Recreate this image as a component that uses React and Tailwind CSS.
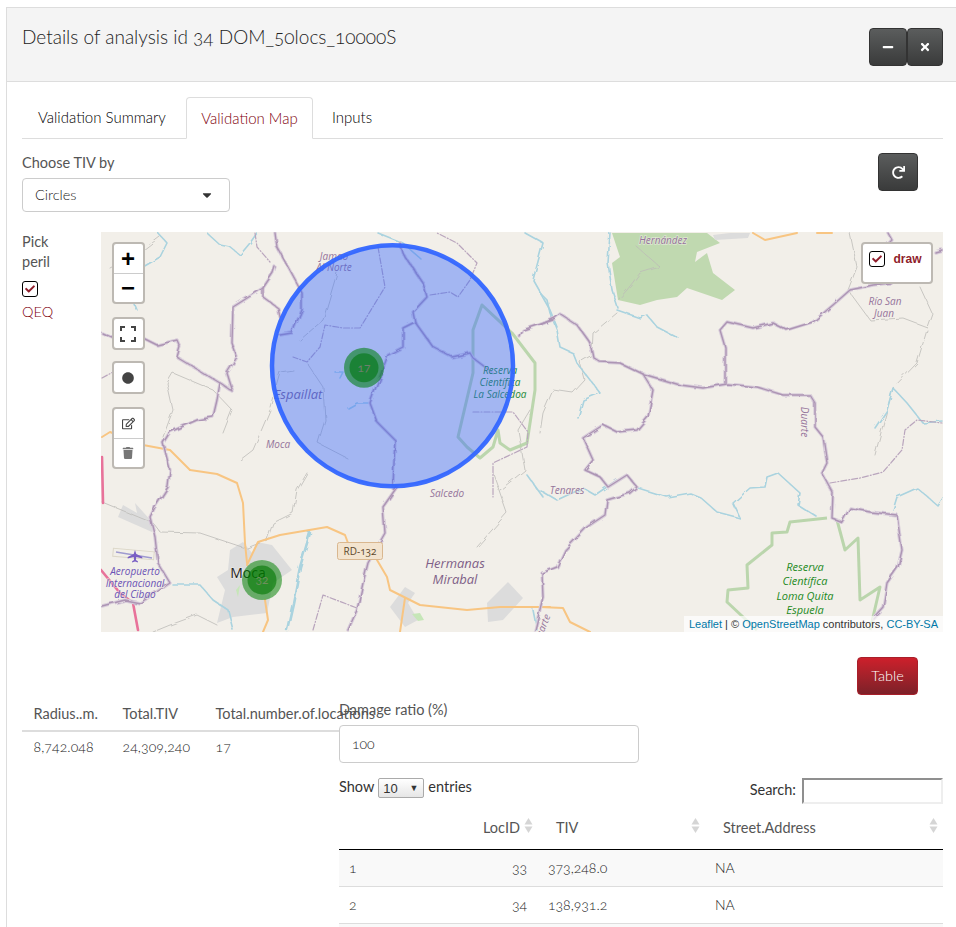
import { FaMinus, FaTimes, FaRedo, FaTrash, FaRegEdit, FaCircle, FaCheck, FaCaretDown } from "react-icons/fa";

// Map line work, in page coordinates (the svg viewBox starts at the map's corner).
const BOUNDARIES = [
  "M540 325L555 318L560 314L577 325L590 343L593 357L600 362L620 363L643 374L680 385L703 388L727 384L757 387L783 395L810 395L815 403L815 427L823 437L827 463L822 473L833 493L832 518L842 522L850 508L870 512L897 515L899 530L902 550L898 567L887 583L883 607L873 618",
  "M725 383L725 347L720 330L727 322L753 328L773 323L787 330L813 322L833 305L850 290L873 285L890 283",
  "M888 233L892 240L886 246",
  "M643 374L653 390L648 417L637 430L617 432L603 425L583 438L593 460L585 470L600 477L608 487L627 475L637 487L630 493L607 500L605 515L587 527L565 550L557 567L542 573L543 597L535 630",
  "M275 233L277 247L302 293L302 310L292 333L280 335",
  "M102 333L113 338L143 338L157 345L177 340L180 347L177 357L220 383L233 392L227 373L237 357L232 343L233 307L263 288L273 273L275 267",
  "M263 288L263 297L278 308L280 317",
  "M220 383L217 400L213 417L197 420L170 432L163 443L170 470L168 487L155 507L150 517L155 537L158 563L170 583L140 603L125 600L102 606",
  "M393 487L395 440L377 422L370 403L388 355L403 347L403 328L415 322L433 347L452 357L470 353L473 358L493 373",
  "M415 322L413 312L427 297L423 283L403 253L400 243",
  "M520 337L523 330L553 320",
  "M397 487L383 507L385 533L368 563L363 583L357 610L348 630",
  "M935 252L942 250",
];
const DASHED = [
  "M830 483L860 478L883 472L902 450L905 430L917 420L942 423",
  "M102 378L113 372",
  "M430 295L450 292L458 297L470 280L477 263L457 243L437 233",
  "M378 247L385 287L360 328L343 328L325 325L320 347L307 362L293 357",
  "M473 412L513 412L528 432L527 447L493 463L493 497",
  "M313 630L323 595L357 608",
  "M255 233L257 247L270 262",
];
const RIVERS = [
  "M617 310L640 318L647 315L657 327L678 338",
  "M610 233L608 263L612 290L618 308",
  "M540 293L547 300L550 313L557 330L560 347L573 353L577 363L590 380L600 393L583 400L578 418",
  "M540 490L557 500L583 488L595 495L617 480",
  "M638 488L667 497L690 493L700 497L717 512L740 518L733 503L750 488L765 487L767 477L778 473L800 493L798 505L817 517",
  "M893 510L897 497L917 488L937 505L942 497",
  "M875 428L887 410L893 388L907 403L923 423L942 421",
  "M158 233L167 243L160 257L143 267L135 273",
  "M135 305L137 310",
  "M207 233L220 245L230 247L240 255L250 243L257 233",
  "M173 585L200 585L213 600L228 610L233 630",
  "M378 233L403 243L422 260",
  "M525 233L543 243L533 280L550 310L557 327",
  "M348 408L357 403L368 403",
  "M335 372L343 372L340 378",
  "M527 475L543 497",
  "M533 610L537 630",
];
const THIN_RIVERS = ["M310 533L300 567L293 603L287 630"];
const ROADS = [
  "M190 470L217 474L237 483L243 503L245 543L247 563",
  "M247 565L258 542L280 535L327 527L345 535L348 543",
  "M377 560L387 577L390 590L420 605L467 610L500 607L550 607",
  "M405 598L400 632",
  "M265 600L268 620L263 632",
  "M102 437L110 432L143 445L170 450L190 470",
  "M540 607L563 608L570 622L590 632",
  "M753 233L765 240L797 233M817 233L832 233",
];
const MOTORWAY = ["M102 457L103 503", "M101 570L120 593L133 603L138 630"];
const THIN_ROADS = [
  "M102 502L153 523L160 532L200 533L245 548",
  "M637 247L660 267L640 273L627 290L618 300",
  "M850 233L857 267L848 290L870 320L903 318L927 327L932 313L920 287",
  "M927 330L917 363L893 388L887 410L875 455",
  "M617 313L593 333L592 355L580 362L585 380L573 393L553 390L543 413L540 433",
  "M163 437L173 410L167 383L173 373L213 390L232 410L223 433",
  "M110 268L143 250L160 237",
  "M270 410L253 450L240 460",
  "M337 273L323 320L300 340",
  "M293 370L280 372L270 407",
  "M307 363L323 387L325 420L318 443L347 458",
  "M217 625L197 615L170 625L153 632",
  "M247 548L267 540L273 523L293 513L297 490L307 473",
  "M493 473L507 513L477 547",
  "M530 410L518 430L525 470L500 490",
];
const TOWNS = [
  "243,542 230,550 228,570 217,577 225,590 217,623 233,617 267,613 273,583 292,570 272,545 257,542 252,553",
  "390,607 405,587 415,593 408,603 418,620 405,627",
  "487,603 508,582 523,598 503,620 488,622",
  "118,517 123,505 137,513 135,503 153,523 152,532",
  "713,235 730,233 750,233 748,238 715,240",
];

function Lines({ items, className, width, dash }) {
  return items.map((d) => (
    <path key={d} d={d} fill="none" className={className} strokeWidth={width} strokeDasharray={dash} strokeLinejoin="round" strokeLinecap="round" />
  ));
}

function Label({ x, y, size = 10, fill = "#95749b", italic = true, rotate, children }) {
  return (
    <text
      x={x}
      y={y}
      fontSize={size}
      fill={fill}
      fontStyle={italic ? "italic" : "normal"}
      fontFamily="'Open Sans', sans-serif"
      textAnchor="middle"
      stroke="#f2efe9"
      strokeOpacity="0.6"
      strokeWidth="1.5"
      paintOrder="stroke"
      transform={rotate ? `rotate(${rotate} ${x} ${y})` : undefined}
    >
      {children}
    </text>
  );
}

function MapDrawing() {
  return (
    <svg viewBox="101 232 842 400" className="absolute inset-0 w-full h-full">
      {/* natural lines wander a bit */}
      <filter id="wiggle" x="101" y="232" width="842" height="400" filterUnits="userSpaceOnUse">
        <feTurbulence type="fractalNoise" baseFrequency="0.09" numOctaves="2" seed="4" />
        <feDisplacementMap in="SourceGraphic" scale="5" />
      </filter>

      <rect x="101" y="232" width="842" height="400" fill="#f2efe9" />
      <polygon points="612,233 620,257 612,263 618,300 640,305 657,300 677,297 687,288 722,300 735,290 713,273 707,253 695,262 697,252 720,243 707,233" fill="#c0d9b0" />
      {TOWNS.map((p) => <polygon key={p} points={p} fill="#dcdcdc" />)}
      <polygon points="236,590 240,585 238,597" fill="#c6e6b8" />
      <polygon points="412,614 420,613 424,620 418,621" fill="#c6e6b8" />

      <g filter="url(#wiggle)">
        <Lines items={THIN_ROADS} className="stroke-[#bdbbb7]" width={0.8} />
        <Lines items={RIVERS} className="stroke-[#aad3df]" width={1.6} />
        <Lines items={THIN_RIVERS} className="stroke-[#aad3df]" width={2.6} />
      </g>
      <Lines items={ROADS} className="stroke-[#f8c582]" width={2} />
      <Lines items={MOTORWAY} className="stroke-[#e8729a]" width={2.6} />

      {/* reserve outlines */}
      <g fill="none" stroke="#b5d3a6" strokeWidth="3" strokeLinejoin="round" opacity="0.9">
        <path d="M827 518L790 522L787 532L772 533L772 545L747 565L748 588L728 590L727 602L757 630" />
        <path d="M837 520L845 550L858 538L860 600L880 587L870 630" />
        <path d="M482 305L512 333L535 363L535 390L527 443L510 450L500 443L498 430L493 447L480 458L467 447L458 437L473 373L473 330Z" />
      </g>

      <g filter="url(#wiggle)">
        <Lines items={BOUNDARIES} className="stroke-[#d9cedb]" width={3.4} />
        <Lines items={BOUNDARIES} className="stroke-[#ad95b4]" width={1.4} />
      </g>
      <Lines items={DASHED} className="stroke-[#b9a5bd]" width={1.2} dash="6 2 1 2" />

      {/* airport */}
      <rect x="113" y="550" width="41" height="8" fill="none" stroke="#dcd7c8" transform="rotate(5 133 554)" />
      <line x1="116" y1="552" x2="152" y2="558" stroke="#9f9bd0" strokeWidth="1.5" />
      <path d="M135 550l1.300 4 6 3v1.500l-6-1.600-.4 3 2 1.400v1.200l-2.900-.9-2.900.9v-1.200l2-1.400-.4-3-6 1.600v-1.500l6-3z" fill="#7a5fc4" />

      <Label x={334} y={260}>Jamao</Label>
      <Label x={334} y={271}>Al Norte</Label>
      <Label x={298} y={399} size={13} fill="#7d6699">Espaillat</Label>
      <Label x={278} y={448}>Moca</Label>
      <Label x={500} y={374} fill="#1d8a3a">Reserva</Label>
      <Label x={500} y={386} fill="#1d8a3a">Científica</Label>
      <Label x={500} y={398} fill="#1d8a3a">La Salcedoa</Label>
      <Label x={447} y={497}>Salcedo</Label>
      <Label x={567} y={494}>Tenares</Label>
      <Label x={801} y={422} rotate={90}>Duarte</Label>
      <Label x={885} y={305}>Río San</Label>
      <Label x={884} y={317}>Juan</Label>
      <Label x={663} y={244}>Hernández</Label>
      <Label x={455} y={568} size={13} fill="#7f5f87">Hermanas</Label>
      <Label x={455} y={584} size={13} fill="#7f5f87">Mirabal</Label>
      <Label x={135} y={575} fill="#6b52b5">Aeropuerto</Label>
      <Label x={135} y={587} fill="#6b52b5">Internacional</Label>
      <Label x={135} y={598} fill="#6b52b5">del Cibao</Label>
      <Label x={805} y={571} size={11} fill="#1d8a1d">Reserva</Label>
      <Label x={805} y={585} size={11} fill="#1d8a1d">Científica</Label>
      <Label x={805} y={600} size={11} fill="#1d8a1d">Loma Quita</Label>
      <Label x={805} y={614} size={11} fill="#1d8a1d">Espuela</Label>
      <Label x={545} y={630} rotate={-68}>Duarte</Label>
      <Label x={248} y={578} size={14} fill="#222" italic={false}>Moca</Label>

      <rect x="337.500" y="542.500" width="45" height="17" rx="2" fill="#f3e4cf" stroke="#d9b78f" />
      <text x="360" y="555" fontSize="10" textAnchor="middle" fill="#5d4a2d" fontFamily="'Open Sans', sans-serif">RD-132</text>

      {/* selection circle */}
      <circle cx="392.500" cy="365.800" r="120.500" fill="#3366ff" fillOpacity="0.41" stroke="#3366ff" strokeOpacity="0.95" strokeWidth="4.500" />

      {/* clusters, see-through so the map labels still show */}
      <circle cx="364" cy="367.700" r="20" fill="#007d10" fillOpacity="0.58" />
      <circle cx="364" cy="367.700" r="14.500" fill="#007610" fillOpacity="0.6" />
      <text x="364" y="372" fontSize="12" textAnchor="middle" fill="#6c7f6c" fontFamily="Lato, sans-serif">17</text>
      <circle cx="262" cy="580" r="20" fill="#008000" fillOpacity="0.53" />
      <circle cx="262" cy="580" r="14.500" fill="#007600" fillOpacity="0.6" />
      <text x="262" y="584" fontSize="12" textAnchor="middle" fill="#6c8f5c" fontFamily="Lato, sans-serif">32</text>
    </svg>
  );
}

function MapControl({ top, rows }) {
  return (
    <div style={{ top }} className="absolute left-[10.500px] w-[33px] rounded-[4px] border-2 border-[#bdb9b3] bg-white bg-clip-padding">
      {rows.map((icon, i) => (
        <div key={i} className={`h-[29px] flex items-center justify-center text-[#444] ${i > 0 ? "border-t border-[#ccc]" : ""}`}>
          {icon}
        </div>
      ))}
    </div>
  );
}

function CheckBox({ className = "" }) {
  return (
    <span className={`w-4 h-4 flex items-center justify-center rounded-[3px] border border-black bg-white text-[#8f1d2b] ${className}`}>
      <FaCheck size={10} />
    </span>
  );
}

function DarkButton({ className = "", children }) {
  return (
    <button type="button" className={`flex items-center justify-center rounded-[4px] border border-[#333] bg-gradient-to-b from-[#5b5d5d] to-[#3a3b3b] text-white ${className}`}>
      {children}
    </button>
  );
}

function SortArrows() {
  return (
    <svg width="9" height="15" viewBox="0 0 9 15" className="absolute top-[14px] right-[5px]" fill="#d5d5d5">
      <path d="M4.500 0L8.500 6.500H.5z" />
      <path d="M4.500 15L.5 8.500H8.500z" />
    </svg>
  );
}

export default function App() {
  return (
    <div className="w-[956px] h-[927px] overflow-hidden bg-white pt-[7px] pl-[6px] [font-family:Lato,sans-serif] [font-variant-numeric:oldstyle-nums] text-[14.500px] text-[#555]">
      <div className="border-l border-t border-[#ddd]">
        <div className="h-[74px] flex justify-between bg-[#f4f4f4] border-b border-[#ddd] pl-[15px] pr-[13px]">
          <h1 className="text-[19px] font-light mt-[16px] leading-[26px] text-[#222]">Details of analysis id 34 DOM_50locs_10000S</h1>
          <div className="flex mt-5">
            <DarkButton className="w-[38px] h-[38px]"><FaMinus size={12} /></DarkButton>
            <DarkButton className="w-[36px] h-[38px]"><FaTimes size={12} /></DarkButton>
          </div>
        </div>

        <div className="pt-[15px] pl-[15px] pr-[13px]">
          <div className="flex h-[42px] border-b border-[#ddd] text-[15px] font-light text-black">
            <div className="w-[162px] h-[41px] flex items-center pl-4">Validation Summary</div>
            <div className="w-[127px] h-[42px] ml-[2px] flex items-center justify-center rounded-t-[4px] border border-b-white border-[#ddd] bg-white text-[#80000c]">Validation Map</div>
            <div className="h-[41px] flex items-center pl-[19px]">Inputs</div>
          </div>

          <div className="flex justify-between h-[93px]">
            <div className="pt-[14px]">
              <div className="leading-5">Choose TIV by</div>
              <div className="mt-[5px] w-[208px] h-[34px] flex items-center justify-between rounded-[4px] border border-[#ccc] pl-3 pr-[15px]">
                <span className="pb-[1px] font-light text-[#222]">Circles</span>
                <FaCaretDown size={14} className="text-[#333]" />
              </div>
            </div>
            <DarkButton className="w-10 h-[38px] mt-[14px] mr-[25px]"><FaRedo size={13} /></DarkButton>
          </div>

          <div className="flex h-[400px]">
            <div className="w-[79px] leading-5">
              <div>Pick<br />peril</div>
              <CheckBox className="mt-[9px]" />
              <div className="mt-[5px] text-[#80000c] font-light">QEQ</div>
            </div>
            <div className="relative flex-1 overflow-hidden">
              <MapDrawing />
              <MapControl
                top={10}
                rows={[
                  <span className="text-[24px] font-bold leading-none text-black [font-family:'Liberation_Sans',sans-serif]">+</span>,
                  <span className="text-[24px] font-bold leading-none text-black [font-family:'Liberation_Sans',sans-serif]">−</span>,
                ]}
              />
              <MapControl
                top={85}
                rows={[
                  <svg width="16" height="16" viewBox="0 0 16 16" fill="none" stroke="#444" strokeWidth="2"><path d="M1 5V1H5M11 1H15V5M15 11V15H11M5 15H1V11" /></svg>,
                ]}
              />
              <MapControl top={129} rows={[<FaCircle size={12} />]} />
              <MapControl top={175} rows={[<FaRegEdit size={13} />, <FaTrash size={12} className="text-[#777]" />]} />
              <div className="absolute top-[10px] right-[10.500px] w-[72px] h-[42px] rounded-[4px] border-2 border-[#bdb9b3] bg-white pl-[6px] pt-[7px] flex items-start gap-[9px]">
                <CheckBox />
                <span className="text-[12px] font-bold leading-4 text-[#8f1d2b] [font-family:'Liberation_Sans',sans-serif]">draw</span>
              </div>
              <div className="absolute bottom-0 right-0 h-4 px-[5px] bg-white/70 text-[11px] leading-4 text-[#333] [font-family:'Liberation_Sans',sans-serif]">
                <span className="text-[#0078a8]">Leaflet</span> | © <span className="text-[#0078a8]">OpenStreetMap</span> contributors, <span className="text-[#0078a8]">CC-BY-SA</span>
              </div>
            </div>
          </div>

          <div className="flex justify-end mt-[25px] pr-[25px]">
            <button type="button" className="w-[61px] h-[38px] pb-[1px] rounded-[4px] border border-[#a81f2a] bg-gradient-to-b from-[#cd1f2b] to-[#7d2028] text-white font-light">Table</button>
          </div>

          <div className="flex mt-1">
            <div className="w-[317px] shrink-0 whitespace-nowrap">
              <div className="flex h-[33px] items-center pb-[2px] pl-[11.500px] border-b-2 border-[#ddd]">
                <div className="w-[89px] shrink-0">Radius..m.</div>
                <div className="w-[93px] shrink-0">Total.TIV</div>
                <div>Total.number.of.locations</div>
              </div>
              <div className="flex h-[29px] items-center pl-[11.500px] text-[14px] tracking-[0.1px] font-light text-[#222]">
                <div className="w-[89px] shrink-0">8,742.048</div>
                <div className="w-[93px] shrink-0">24,309,240</div>
                <div>17</div>
              </div>
            </div>

            <div className="w-[604px] shrink-0">
              <div className="pt-[1px] h-5 leading-5">Damage ratio (%)</div>
              <div className="mt-[6px] w-[300px] h-[38px] flex items-center rounded-[4px] border border-[#ccc] pl-3">
                <span className="pb-[2px] text-[14px] font-light text-[#222]">100</span>
              </div>

              <div className="flex justify-between mt-[15px] h-[26px] text-[#333]">
                <div className="flex items-start">
                  <span className="leading-[18px]">Show</span>
                  <span className="mx-[4px] w-[46px] h-5 flex items-center justify-between rounded-[2px] border border-[#aaa] bg-gradient-to-b from-white to-[#e6e6e6] pl-[4px] pr-[5px] text-[13px] leading-none [font-family:'Liberation_Sans',sans-serif] [font-variant-numeric:normal]">
                    10
                    <span className="text-[9px] text-[#333]">▼</span>
                  </span>
                  <span className="leading-[18px]">entries</span>
                </div>
                <div className="flex items-center">
                  <span className="mr-[6px] pb-[2px]">Search:</span>
                  <span className="block w-[141px] h-[26px] border-2 border-t-[#8f8f8f] border-l-[#8f8f8f] border-r-[#eee] border-b-[#eee] bg-white" />
                </div>
              </div>

              <table className="w-[604px] table-fixed border-collapse">
                <colgroup>
                  <col className="w-[125px]" />
                  <col className="w-[74px]" />
                  <col className="w-[167px]" />
                  <col className="w-[238px]" />
                </colgroup>
                <thead>
                  <tr className="h-[45px] border-b border-black">
                    <th />
                    <th className="relative font-normal text-right pr-[18px] pt-[3px]">LocID<SortArrows /></th>
                    <th className="relative font-normal text-left pl-[18px] pt-[3px]">TIV<SortArrows /></th>
                    <th className="relative font-normal text-left pl-[18px] pt-[3px]">Street.Address<SortArrows /></th>
                  </tr>
                </thead>
                <tbody className="text-[14px] font-light text-[#222]">
                  <tr className="h-[37px] bg-[#f9f9f9] border-b border-[#ddd]">
                    <td className="pl-[10px]">1</td>
                    <td className="text-right pr-[11px]">33</td>
                    <td className="pl-[10px]">373,248.0</td>
                    <td className="pl-[10px]">NA</td>
                  </tr>
                  <tr className="h-[37px] border-b border-[#ddd]">
                    <td className="pl-[10px]">2</td>
                    <td className="text-right pr-[11px]">34</td>
                    <td className="pl-[10px]">138,931.2</td>
                    <td className="pl-[10px]">NA</td>
                  </tr>
                  <tr className="h-[37px] bg-[#f9f9f9]"><td colSpan={4} /></tr>
                </tbody>
              </table>
            </div>
          </div>
        </div>
      </div>
    </div>
  );
}
